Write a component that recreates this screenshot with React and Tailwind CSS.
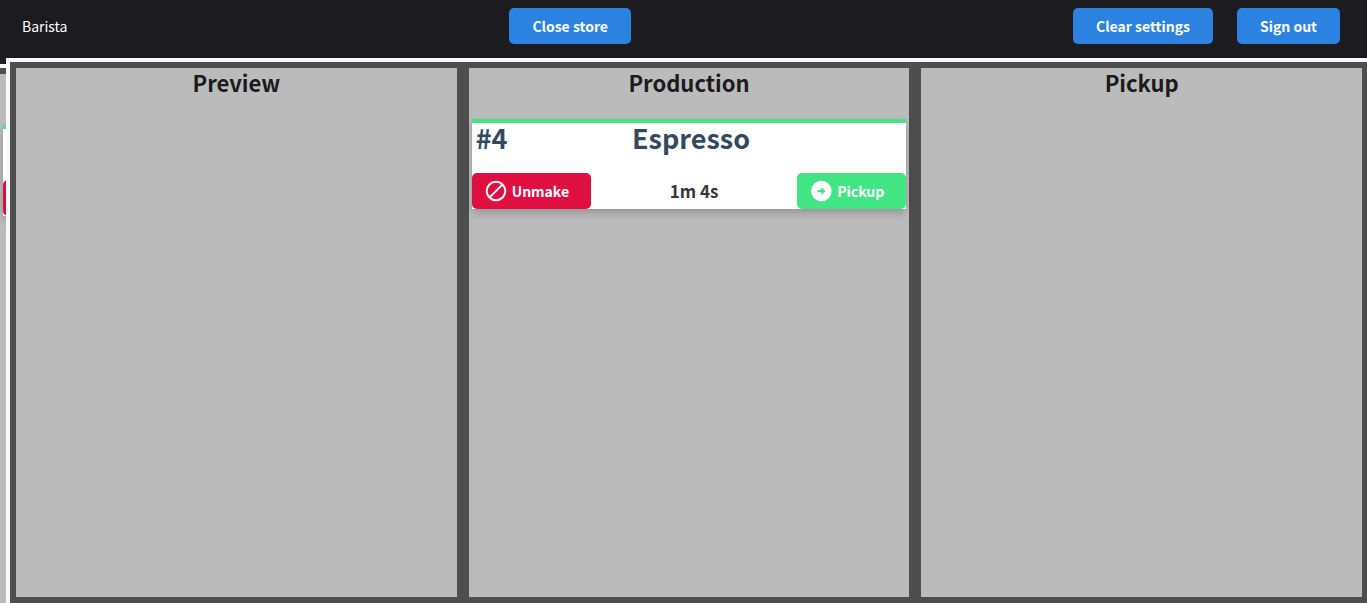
function ProhibitIcon() {
  return (
    <svg aria-hidden="true" viewBox="0 0 24 24" className="size-6" fill="none" stroke="currentColor" strokeWidth="2">
      <circle cx="12" cy="12" r="9.3" />
      <path d="M5.4 18.6 18.6 5.4" />
    </svg>
  );
}

function ArrowIcon() {
  return (
    <svg aria-hidden="true" viewBox="0 0 24 24" className="size-6">
      <circle cx="12.4" cy="12" r="10.3" fill="white" />
      <path d="M8.6 12h6M12.4 9.2 15.2 12l-2.8 2.8" fill="none" stroke="#41e584" strokeWidth="1.8" />
    </svg>
  );
}

function NavButton({ children }) {
  return (
    <button type="button" className="h-9 rounded-[5px] bg-[#2b82e1] px-[23px] text-sm font-bold text-white">
      {children}
    </button>
  );
}

function OrderCard({ number, name, time }) {
  return (
    <article className="border-t-4 border-[#41e584] bg-white shadow-[0_4px_8px_rgba(0,0,0,0.2)]">
      <div className="grid h-[50px] grid-cols-3 pl-1 text-[27px] leading-[30px] font-bold text-[#34495e]">
        <span>{number}</span>
        <h3 className="text-center">{name}</h3>
      </div>
      <div className="flex items-center justify-between">
        <button type="button" className="flex h-9 items-center gap-1 rounded-[5px] bg-[#df0f41] pr-[22px] pl-3 text-sm font-bold text-white">
          <ProhibitIcon />
          Unmake
        </button>
        <span className="text-[17px] font-bold text-[#363636]">{time}</span>
        <button type="button" className="flex h-9 items-center gap-1 rounded-[5px] bg-[#41e584] pr-[22px] pl-3 text-sm font-bold text-white">
          <ArrowIcon />
          Pickup
        </button>
      </div>
    </article>
  );
}

function Column({ title, children }) {
  return (
    <section className="min-w-0 border-6 border-[#4e4e4e] bg-[#bbbbbb] px-[3px]">
      <h2 className="mb-[22px] text-center text-[22px] leading-[29px] font-bold text-[#1c1b20]">{title}</h2>
      {children}
    </section>
  );
}

export default function App() {
  return (
    <div className="flex min-h-screen flex-col overflow-x-hidden bg-[#1c1b20] font-['Noto_Sans_CJK_SC',sans-serif]">
      <header className="flex h-[58px] items-start justify-between pt-2 pr-[27px] pl-[22px]">
        <span className="text-sm leading-9 text-white">Barista</span>
        <NavButton>Close store</NavButton>
        <div className="flex gap-6">
          <NavButton>Clear settings</NavButton>
          <NavButton>Sign out</NavButton>
        </div>
      </header>
      <div className="flex flex-1">
        <div aria-hidden="true" className="mt-1.5 w-1.5 shrink-0 overflow-hidden border-t-4 border-[#f8f9fb] bg-[#bbbbbb]">
          <div className="h-1.5 bg-[#4e4e4e]" />
          <div className="mt-[51px] ml-[3px] w-20 border-t-4 border-[#41e584] bg-white pt-[51px] shadow-[0_4px_8px_rgba(0,0,0,0.2)]">
            <div className="h-9 rounded-[5px] bg-[#df0f41]" />
          </div>
        </div>
        <main className="-mr-px grid flex-1 grid-cols-3 border-t-4 border-l-4 border-[#f8f9fb] bg-[#4e4e4e]">
          <Column title="Preview" />
          <Column title="Production">
            <OrderCard number="#4" name="Espresso" time="1m 4s" />
          </Column>
          <Column title="Pickup" />
        </main>
      </div>
    </div>
  );
}
